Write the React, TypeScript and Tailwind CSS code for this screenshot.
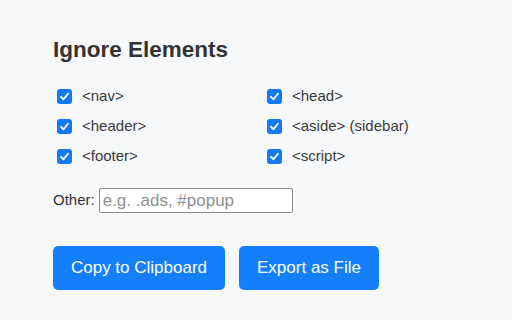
import React from 'react';

const items = [
  '<nav>',
  '<head>',
  '<header>',
  '<aside> (sidebar)',
  '<footer>',
  '<script>',
];

const Check: React.FC<{ label: string }> = ({ label }) => (
  <label className="flex items-center h-[30px] gap-[10px] cursor-pointer">
    <span className="flex items-center justify-center w-[15px] h-[15px] rounded-[3px] bg-[#1479f6]">
      <svg viewBox="0 0 12 12" className="w-[11px] h-[11px]">
        <path d="M2.2 6.3 L4.9 9 L9.8 3" fill="none" stroke="#fff" strokeWidth="2" strokeLinecap="round" strokeLinejoin="round" />
      </svg>
    </span>
    <span className="text-[15px] text-[#3a3a3a]">{label}</span>
  </label>
);

export default function App() {
  return (
    <div className="w-[512px] h-[320px] bg-[#f7f8fa] pl-[53px] pt-[36px] font-[family-name:Liberation_Sans,Arial,sans-serif] overflow-hidden">
      <h2 className="text-[22.5px] leading-[28px] font-bold text-[#333]">Ignore Elements</h2>

      <div className="grid grid-cols-[210px_1fr] mt-[17px] ml-[4px]">
        {items.map((it) => (
          <Check key={it} label={it} />
        ))}
      </div>

      <div className="flex items-center mt-[17px] gap-[4px]">
        <span className="text-[15px] text-[#333]">Other:</span>
        <input
          placeholder="e.g. .ads, #popup"
          className="w-[194px] h-[25px] border border-[#8a8a8a] rounded-[2px] bg-white px-[3px] text-[17px] text-[#333] placeholder:text-[#8f8f8f] outline-none"
        />
      </div>

      <div className="flex gap-[14px] mt-[33px]">
        <button className="h-[44px] w-[172px] rounded-[5px] bg-[#147ffb] text-white text-[17px]">
          Copy to Clipboard
        </button>
        <button className="h-[44px] w-[140px] rounded-[5px] bg-[#147ffb] text-white text-[17px]">
          Export as File
        </button>
      </div>
    </div>
  );
}
